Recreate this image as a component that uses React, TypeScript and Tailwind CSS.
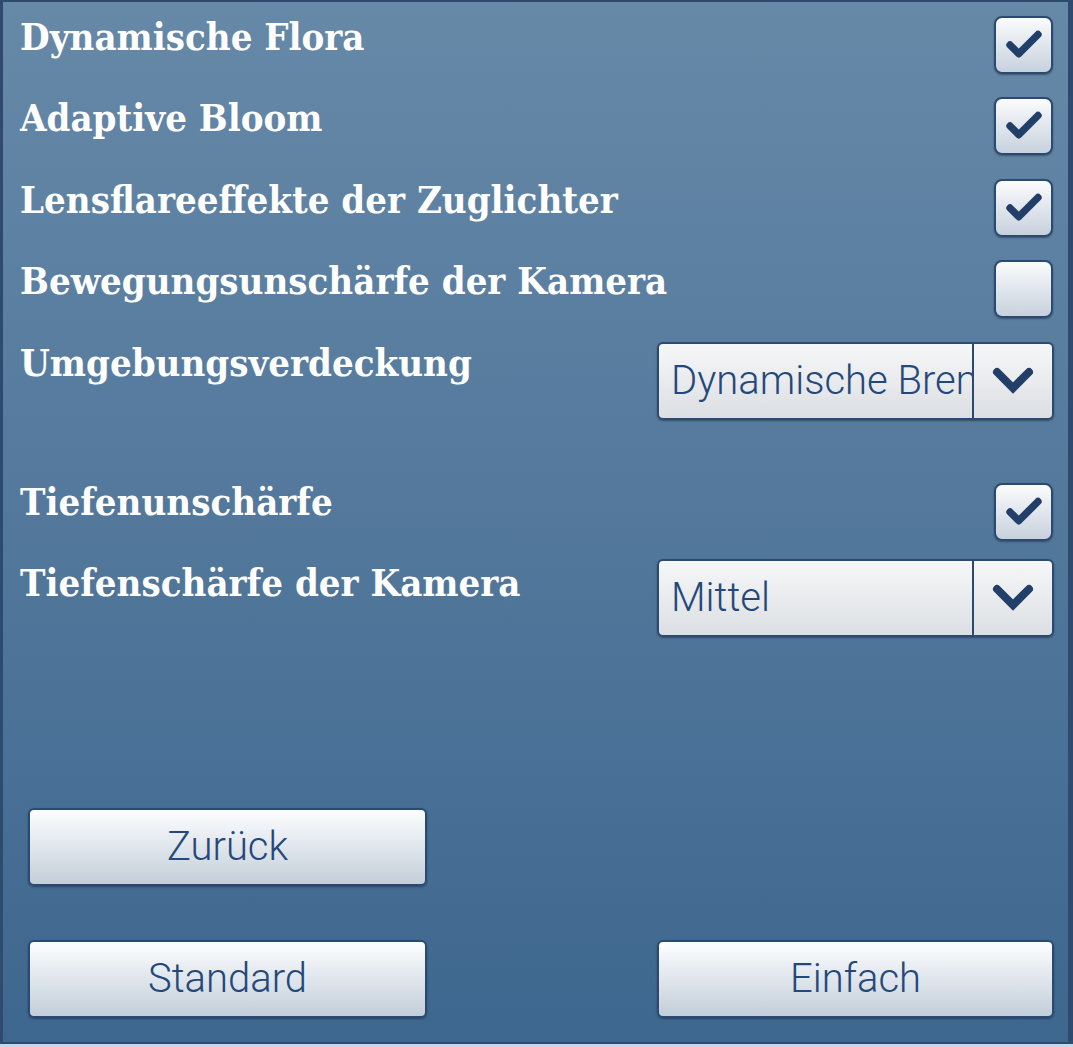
import { Check } from "lucide-react";

const labelFont = "font-['DejaVu_Serif',serif] font-bold font-stretch-condensed text-[38px] leading-none text-white";
const uiFont = "font-['Roboto','Liberation_Sans',sans-serif] font-light text-[40px] leading-none text-[#24487a]";

const Checkbox = ({ checked }: { checked: boolean }) => (
  <div className="w-[59px] h-[58px] mr-[1px] shrink-0 rounded-[8px] border-2 border-[#2b4a72] bg-gradient-to-b from-[#fbfcfd] to-[#c7d1dd] shadow-[0_1px_2px_rgba(0,0,0,0.35)] flex items-center justify-center">
    {checked && <Check size={42} strokeWidth={4.2} className="text-[#213f69]" />}
  </div>
);

const Chevron = () => (
  <svg width="44" height="32" viewBox="0 0 44 32" className="text-[#213f69]">
    <polyline points="6,7 22,23 38,7" fill="none" stroke="currentColor" strokeWidth="8" strokeLinecap="round" strokeLinejoin="miter" />
  </svg>
);

const Select = ({ value }: { value: string }) => (
  <div className="w-[397px] h-[78px] shrink-0 rounded-[6px] border-2 border-[#2b4a72] bg-gradient-to-b from-[#f6f7f8] to-[#dcdfe3] shadow-[0_1px_2px_rgba(0,0,0,0.35)] flex">
    <div className="flex-1 pl-[12px] pr-[10px] overflow-hidden whitespace-nowrap flex items-center">
      <span className={uiFont}>{value}</span>
    </div>
    <div className="w-[2px] bg-[#2b4a72]" />
    <div className="w-[78px] flex items-center justify-center">
      <Chevron />
    </div>
  </div>
);

const Button = ({ label, width }: { label: string; width: string }) => (
  <div className={`${width} h-[78px] rounded-[6px] border-2 border-[#2b4a72] bg-gradient-to-b from-[#fdfeff] to-[#c3ceda] shadow-[0_1px_2px_rgba(0,0,0,0.35)] flex items-center justify-center`}>
    <span className={uiFont}>{label}</span>
  </div>
);

const Row = ({ label, children, className, labelPad }: { label: string; children: React.ReactNode; className?: string; labelPad?: string }) => (
  <div className={`flex items-start justify-between ${className ?? ""}`}>
    <span className={`${labelFont} ${labelPad ?? "pt-[2px]"}`}>{label}</span>
    {children}
  </div>
);

export default function App() {
  return (
    <div className="w-[1073px] h-[1047px] bg-[#c6d7e7]">
      <div className="h-[1044px] border-l-[3px] border-t-2 border-r-[5px] border-b-2 border-[#2e4b6f] bg-gradient-to-b from-[#6789a8] to-[#3e678f] flex flex-col pl-[17px] pr-[14px] pt-[14px]">
        <Row label="Dynamische Flora">
          <Checkbox checked />
        </Row>
        <Row label="Adaptive Bloom" className="mt-[23px]">
          <Checkbox checked />
        </Row>
        <Row label="Lensflareeffekte der Zuglichter" className="mt-[24px]">
          <Checkbox checked />
        </Row>
        <Row label="Bewegungsunschärfe der Kamera" className="mt-[23px]">
          <Checkbox checked={false} />
        </Row>
        <Row label="Umgebungsverdeckung" className="mt-[24px]">
          <Select value="Dynamische Bremsung" />
        </Row>
        <Row label="Tiefenunschärfe" className="mt-[63px]" labelPad="pt-0">
          <Checkbox checked />
        </Row>
        <Row label="Tiefenschärfe der Kamera" className="mt-[18px]" labelPad="pt-[5px]">
          <Select value="Mittel" />
        </Row>

        <div className="mt-[171px] pl-[8px]">
          <Button label="Zurück" width="w-[399px]" />
        </div>
        <div className="mt-[54px] pl-[8px] flex justify-between">
          <Button label="Standard" width="w-[399px]" />
          <Button label="Einfach" width="w-[397px]" />
        </div>
      </div>
    </div>
  );
}
